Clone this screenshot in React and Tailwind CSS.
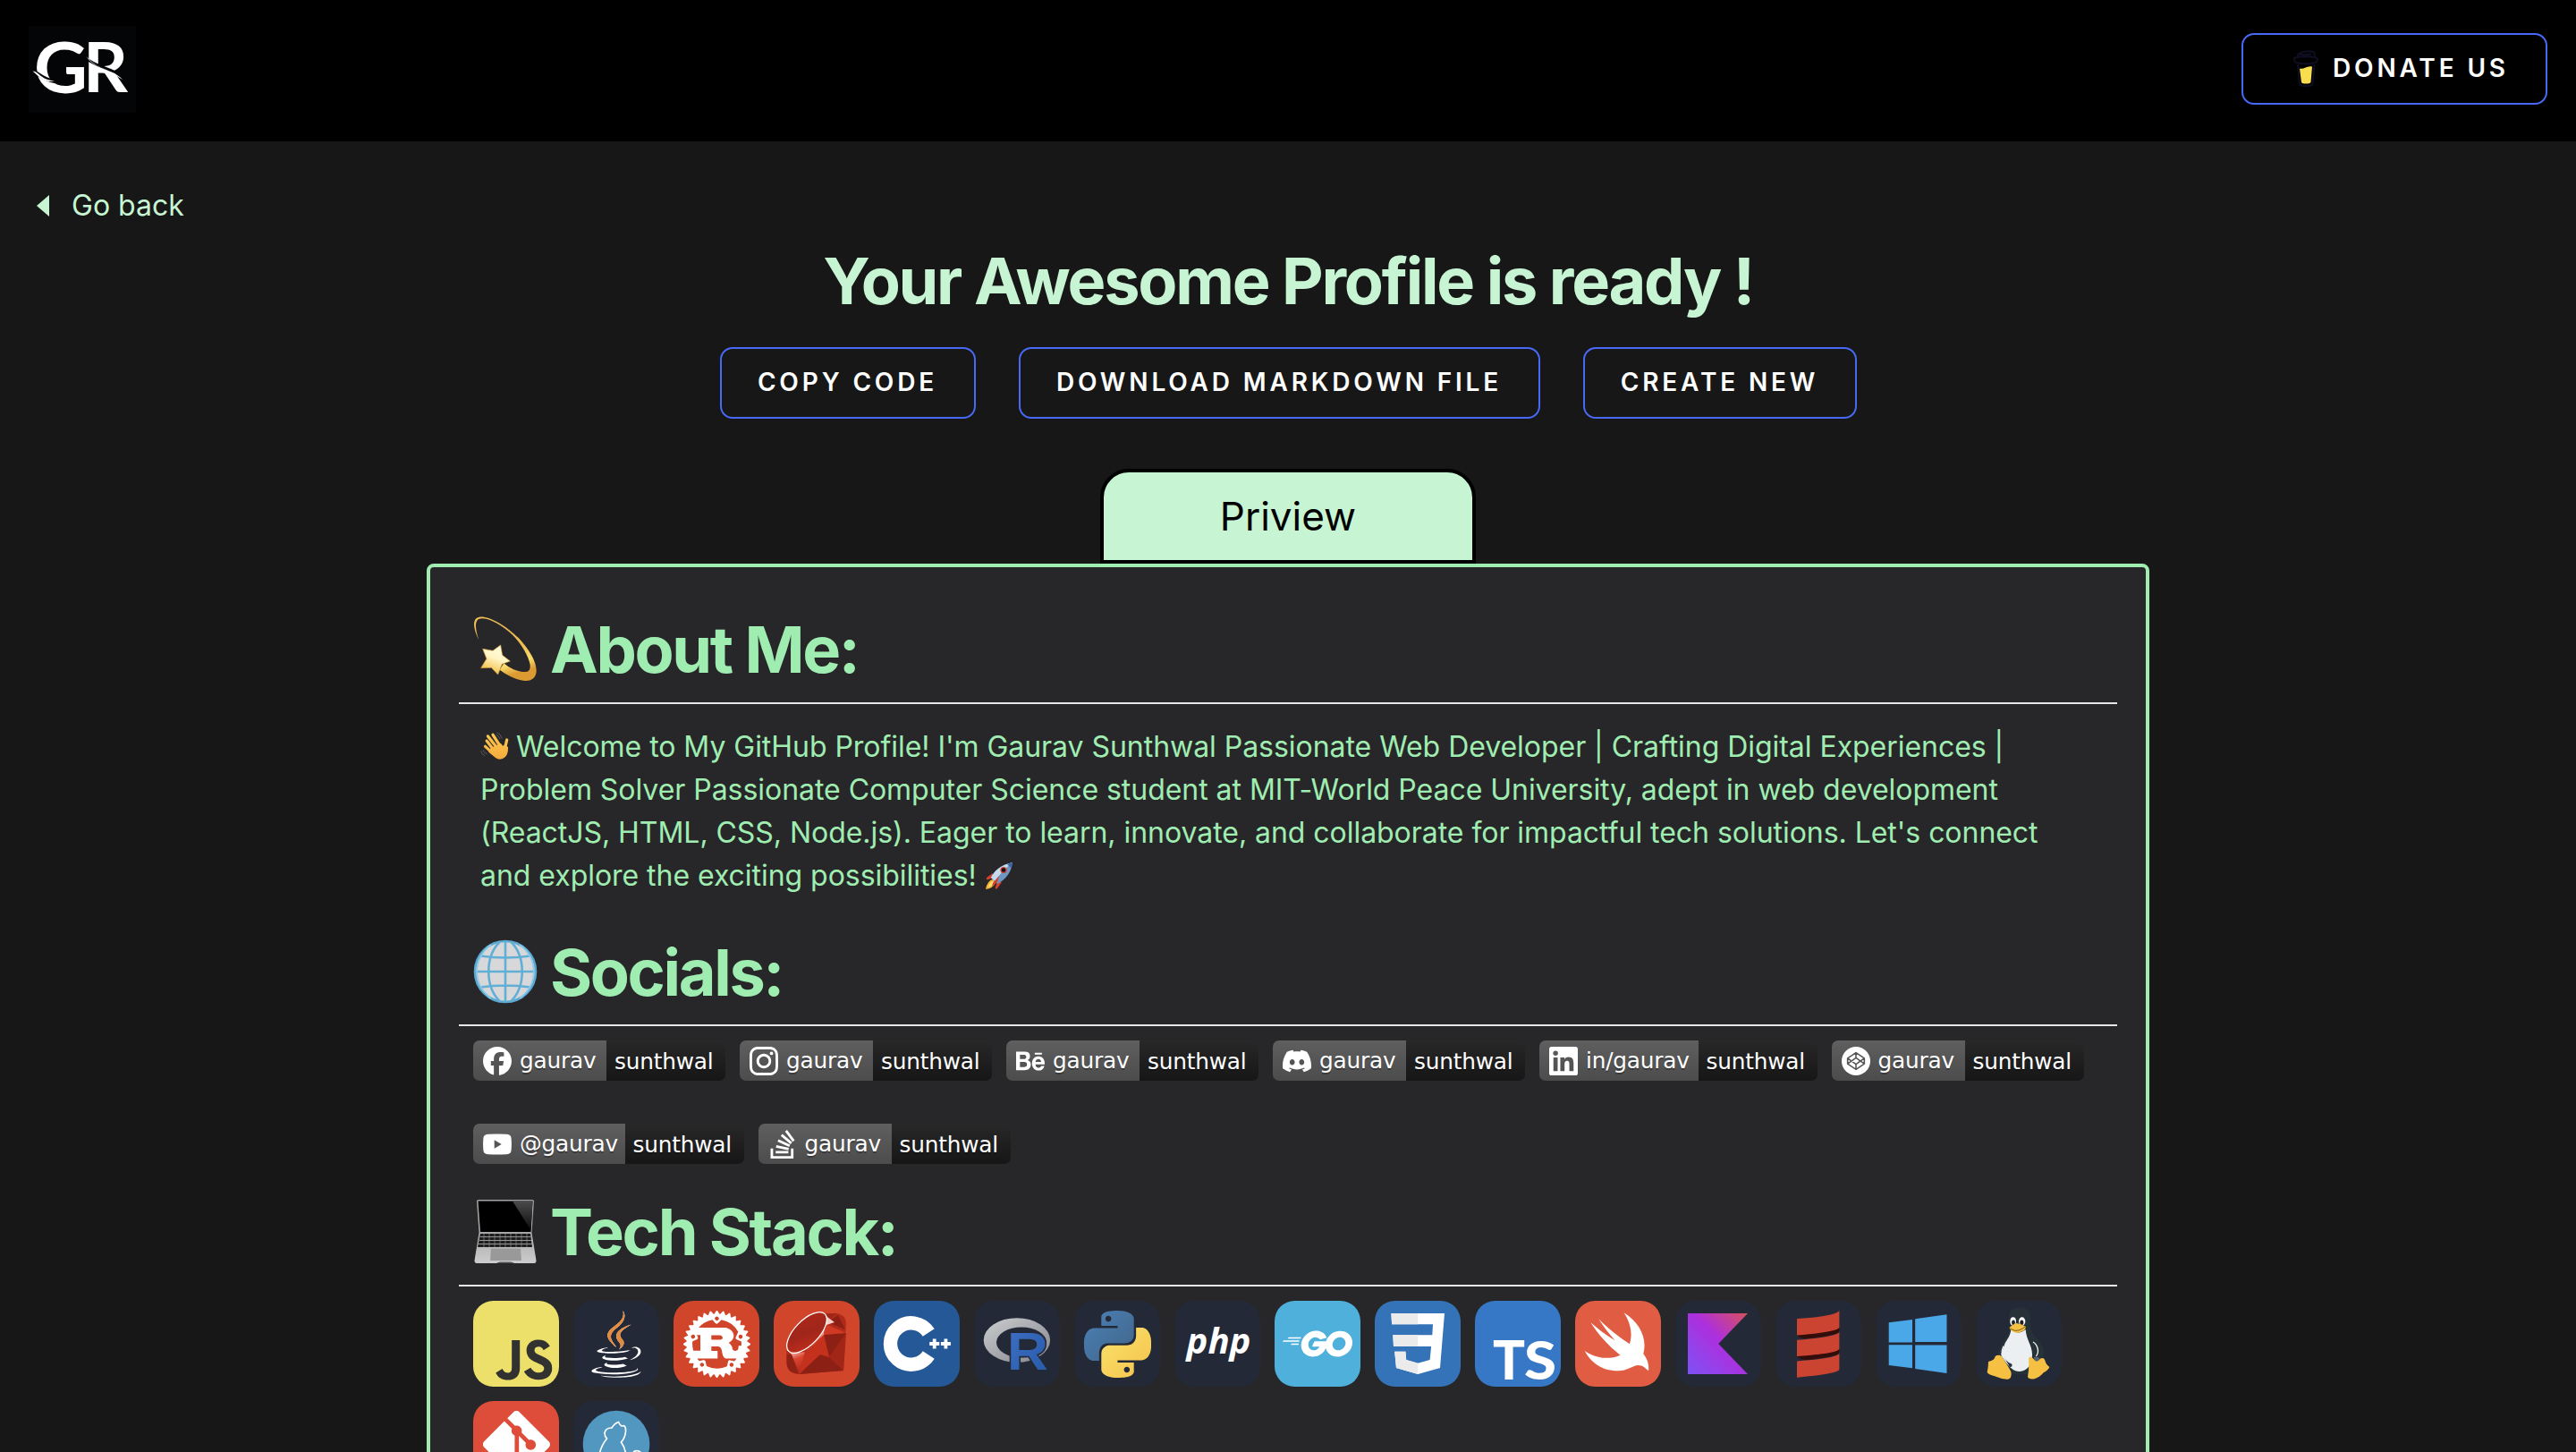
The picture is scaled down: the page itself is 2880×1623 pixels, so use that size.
import React from "react";
import {
  SiFacebook, SiInstagram, SiBehance, SiDiscord, SiStackoverflow,
  SiJavascript, SiRust, SiGo, SiGit,
} from "react-icons/si";
import { FaJava } from "react-icons/fa";

/* ---------- brand and emoji drawings ---------- */

function Logo() {
  return (
    <svg viewBox="32 29 120 97" className="h-[97px] w-[120px] overflow-visible bg-[#040507]">
      <g fill="#fff" fontFamily="Lato, sans-serif" fontWeight="900">
        <text x="38" y="104" fontSize="78" textLength="60" lengthAdjust="spacingAndGlyphs" fontWeight="700">G</text>
        <text x="93" y="103" fontSize="76" textLength="50" lengthAdjust="spacingAndGlyphs" fontWeight="700">R</text>
      </g>
      <path d="M36 79C44 82 46 88 61 91" fill="none" stroke="#040507" strokeWidth="4" />
      <path d="M36.500 79.500C44 80 45 89 61 90.500C50 93 45 87 36.500 79.500Z" fill="#fff" />
      <path d="M96 65C106 74 122 76 137 85" fill="none" stroke="#040507" strokeWidth="3" />
      <path d="M97 63C100 73 122 77 129 84L137 89C134 85 131 86 136 88C130 80 105 76 97 63Z" fill="#fff" />
    </svg>
  );
}

function CoffeeCup() {
  return (
    <svg viewBox="0 0 28 41" className="h-[41px] w-7" fill="none" stroke="#0f0e22" strokeWidth="2" strokeLinejoin="round">
      <path d="M5 16L7 38C8 41 20 41 21.500 38L23.500 16" />
      <path d="M7 20.500C12 22 15 17 21 18.500L19.500 36C18 38 10 38 9 36Z" fill="#f8de4e" stroke="none" />
      <path d="M1.500 8.500C9 7 19 7 26 8.500C28 11 26 14 25 14C18 15.500 9 15.500 3 14C1 13 0 10 1.500 8.500Z" />
      <path d="M5 7C3 1 23 0 23.500 3L24 7M7 4.500C12 6 16 5 20 4.500" />
    </svg>
  );
}

function DizzyEmoji() {
  return (
    <svg viewBox="27 27 216 216" className="size-[72px] shrink-0">
      <defs>
        <linearGradient id="ring" x1="0" y1="0" x2="0.300" y2="1">
          <stop offset="0" stopColor="#f0c057" /><stop offset="0.600" stopColor="#eebb50" /><stop offset="0.850" stopColor="#f9dc6b" /><stop offset="1" stopColor="#dc9a33" />
        </linearGradient>
        <linearGradient id="star" x1="0.700" y1="0" x2="0.300" y2="1">
          <stop offset="0" stopColor="#fffbe0" /><stop offset="0.450" stopColor="#fff5c4" /><stop offset="1" stopColor="#efb835" />
        </linearGradient>
      </defs>
      <path fill="url(#ring)" d="M46 106C30 75 24 45 38 33C60 15 130 50 180 100C215 138 240 180 239 210C238 238 215 246 195 242C165 238 135 220 116 206L130 184C150 202 175 212 195 213C215 214 219 205 218 190C215 165 190 120 160 90C120 50 65 25 45 36C30 46 36 75 46 106Z" />
      <path fill="url(#star)" stroke="#d99a3a" strokeWidth="2" strokeLinejoin="round" d="M119 123L125 157L151 177L124 187L110 222L88 199L53 200L72 169L59 136L93 142Z" />
    </svg>
  );
}

function GlobeEmoji() {
  return (
    <svg viewBox="0 0 72 72" className="size-[72px] shrink-0" fill="none" stroke="#62afd6" strokeWidth="2.600">
      <circle cx="36" cy="36" r="34" fill="#d8d8da" stroke="#5ba9d1" />
      <path d="M36 2V70M2 36H70M8 18.500C26 21 46 21 64 18.500M8 53.500C26 51 46 51 64 53.500" />
      <path d="M30 2.500C13 19 13 53 30 69.500M42 2.500C59 19 59 53 42 69.500" />
      <path d="M20 6C-1 22 -1 50 20 66M52 6C73 22 73 50 52 66" strokeWidth="1.600" stroke="#8ccbe8" />
    </svg>
  );
}

function LaptopEmoji() {
  return (
    <svg viewBox="0 0 72 72" className="size-[72px] shrink-0">
      <defs>
        <linearGradient id="deck" x1="0" y1="0" x2="0" y2="1"><stop offset="0" stopColor="#a9a9a9" /><stop offset="1" stopColor="#cdcdcd" /></linearGradient>
        <linearGradient id="glare" x1="0" y1="0" x2="0" y2="1"><stop offset="0" stopColor="#4b4b4b" /><stop offset="1" stopColor="#0c0c0c" /></linearGradient>
      </defs>
      <path d="M4 2.500Q4 1 6 1H66Q68 1 68 2.500L65.500 38H6.500Z" fill="#a5a5a5" />
      <path d="M5.500 2.500H66.500L64.500 37H8Z" fill="#000" />
      <path d="M44 2.500H66.500L64.500 35Z" fill="url(#glare)" />
      <path d="M6.500 38H65.500L70.500 69Q70.500 72 68 72H4Q1.500 72 1.500 69Z" fill="url(#deck)" />
      <path d="M8 39H64L66 54H5Z" fill="#1c1c1c" />
      <path d="M7.500 42.500H64.500M7 46.500H65M6 50.500H66" stroke="#a5a5a5" strokeWidth="0.900" />
      <path d="M12 39V54M18 39V54M24 39V54M30 39V54M36 39V54M42 39V54M48 39V54M54 39V54M60 39V54" stroke="#8d8d8d" strokeWidth="0.700" />
      <path d="M20 55.500H53L54 69H19Z" fill="#999" />
      <path d="M26 72Q28 70.500 30 70.500H42Q44 70.500 46 72Z" fill="#555" />
    </svg>
  );
}

function WaveEmoji() {
  return (
    <svg viewBox="50 413 98 98" className="mr-[8px] inline-block size-8 align-[-4px]">
      <defs><linearGradient id="skin" gradientUnits="userSpaceOnUse" x1="0" y1="420" x2="0" y2="510"><stop offset="0" stopColor="#fdca52" /><stop offset="1" stopColor="#f3a93c" /></linearGradient></defs>
      <g stroke="url(#skin)" strokeLinecap="round" strokeWidth="10">
        <path d="M72 444L96 476M76 428L106 466M93 423L118 462M67 463L92 486M134 470L141 440.500" />
      </g>
      <path d="M86 468L120 452Q126 462 129 461L134 455L145 466Q146 492 132 502Q116 512 102 502L78 482Z" fill="url(#skin)" />
      <path d="M79 445L95 465M90 438L104 458" stroke="#d98c2b" strokeWidth="1.500" />
      <g fill="none" stroke="#66666a" strokeWidth="2.500"><path d="M107 416Q120 420 124 436M104 423Q114 427 118 438M52 478Q54 490 66 495M59 475Q62 484 73 489" /></g>
    </svg>
  );
}

function RocketEmoji() {
  return (
    <svg viewBox="0 0 32 32" className="inline-block size-8 align-[-5px]">
      <path d="M9 13L2 18Q1 21 4 20L9 18ZM19 23L14 30Q11 32 12 28L14 23Z" fill="#d8402c" />
      <path d="M9 20Q3 21 1 31Q9 30 12 24Z" fill="#f4b63c" /><path d="M9 22Q5 24 4 29Q8 27 10 24Z" fill="#fbe66b" />
      <path d="M7 18Q13 5 31 1Q29 17 14 25Z" fill="#6f96c2" /><path d="M7 18Q13 5 31 1Q20 10 11 22Z" fill="#c5d9ec" />
      <path d="M25 3L31 1L29 7Z" fill="#3465a4" />
      <circle cx="21" cy="9.500" r="3.600" fill="#c9402f" /><circle cx="21" cy="9.500" r="2.200" fill="#111" />
      <path d="M9 24L16 16L14 23L8 28Z" fill="#d33f2c" />
    </svg>
  );
}

/* ---------- social badges ---------- */

const ICON = "size-8";

function LinkedinIcon() {
  return (
    <svg viewBox="0 0 24 24" className={ICON} fill="currentColor">
      <path d="M20.447 20.452h-3.554v-5.569c0-1.328-.027-3.037-1.852-3.037-1.853 0-2.136 1.445-2.136 2.939v5.667H9.351V9h3.414v1.561h.046c.477-.9 1.637-1.850 3.370-1.850 3.601 0 4.267 2.370 4.267 5.455v6.286zM5.337 7.433a2.062 2.062 0 0 1-2.063-2.065 2.064 2.064 0 1 1 2.063 2.065zm1.782 13.019H3.555V9h3.564v11.452zM22.225 0H1.771C.792 0 0 .774 0 1.729v20.542C0 23.227.792 24 1.771 24h20.451C23.200 24 24 23.227 24 22.271V1.729C24 .774 23.200 0 22.222 0h.003z" />
    </svg>
  );
}

function CodepenIcon() {
  return (
    <svg viewBox="0 0 24 24" className={ICON} fill="none">
      <circle cx="12" cy="12" r="12" fill="currentColor" />
      <path d="M12 5L19 9.700V14.300L12 19L5 14.300V9.700ZM12 5V9.300M12 14.700V19M5 9.700L12 14.700L19 9.700M5 14.300L12 9.300L19 14.300" stroke="#565656" strokeWidth="1.200" strokeLinejoin="round" />
    </svg>
  );
}

function YoutubeIcon() {
  return (
    <svg viewBox="0 0 24 24" className={ICON}>
      <path d="M4 3.600Q12 3 20 3.600Q23.500 4 23.700 7Q24.200 12 23.700 17Q23.500 20 20 20.400Q12 21 4 20.400Q.5 20 .3 17Q-.2 12 .3 7Q.5 4 4 3.600Z" fill="currentColor" />
      <path d="M9.500 8.500L15.500 12L9.500 15.500Z" fill="#565656" />
    </svg>
  );
}

function Badge({ icon: Icon, label, width }) {
  return (
    <div className="flex h-[45px] overflow-hidden rounded-[7px] font-['DejaVu_Sans',sans-serif] text-[24.75px] leading-[47px] tracking-[-0.2px] text-white">
      <div className={`flex items-center bg-linear-to-b from-[#5f5f5f] to-[#4c4c4c] pl-[11px] ${width}`}>
        <Icon className={ICON} />
        <span className="ml-[9px] [text-shadow:0_2.250px_0_rgba(1,1,1,0.300)]">{label}</span>
      </div>
      <div className="w-[133px] bg-linear-to-b from-[#282828] to-[#161616] pl-[9px] [text-shadow:0_2.250px_0_rgba(1,1,1,0.300)]">
        sunthwal
      </div>
    </div>
  );
}

const socials = [
  { icon: SiFacebook, label: "gaurav", width: "w-[149px]" },
  { icon: SiInstagram, label: "gaurav", width: "w-[149px]" },
  { icon: SiBehance, label: "gaurav", width: "w-[149px]" },
  { icon: SiDiscord, label: "gaurav", width: "w-[149px]" },
  { icon: LinkedinIcon, label: "in/gaurav", width: "w-[177.5px]" },
  { icon: CodepenIcon, label: "gaurav", width: "w-[149px]" },
  { icon: YoutubeIcon, label: "@gaurav", width: "w-[169.5px]" },
  { icon: SiStackoverflow, label: "gaurav", width: "w-[149px]" },
];

/* ---------- tech tiles ---------- */

const Art = ({ children }) => <svg viewBox="0 0 96 96" className="size-24 overflow-visible">{children}</svg>;

const Javascript = () => <SiJavascript className="size-24 rounded-[22.500px] text-[#ecdf6a]" />;

const Java = () => (
  <div className="relative h-[75px] w-[56px]">
    <FaJava className="h-[75px] w-[56px] text-white" />
    <FaJava className="absolute inset-0 h-[75px] w-[56px] text-[#e58a3a] [clip-path:polygon(0_0,100%_0,100%_50%,66%_50%,60%_57%,50%_58%,38%_54%,34%_51%,0_51%)]" />
  </div>
);

const Rust = () => <SiRust className="size-[75px] text-white" />;

const Ruby = () => (
  <Art>
    <defs>
      <linearGradient id="rb1" x1="0" y1="1" x2="1" y2="0"><stop offset="0" stopColor="#c5301c" /><stop offset="0.500" stopColor="#a0251a" /><stop offset="1" stopColor="#b02a1a" /></linearGradient>
      <linearGradient id="rb2" x1="0" y1="0" x2="0.300" y2="1"><stop offset="0" stopColor="#fff" /><stop offset="0.500" stopColor="#d9452f" /><stop offset="1" stopColor="#b52a1c" /></linearGradient>
      <linearGradient id="rb3" x1="1" y1="0" x2="0.200" y2="1"><stop offset="0" stopColor="#fff" /><stop offset="0.450" stopColor="#e0543c" /><stop offset="1" stopColor="#b52a1c" /></linearGradient>
    </defs>
    <path d="M50 15Q54 14 71 14Q80 16 81 24L78 78L29 82Q14 82 14.500 66L14 52Z" fill="#b02a1a" />
    <path d="M14.500 54L28 56L35 57L29 82L20 60Z" fill="url(#rb2)" />
    <path d="M14.500 60L20 60L28 81.500Q14 81 14.500 68Z" fill="#8f2215" />
    <path d="M58 22L56 40L37 57L28 58Q50 45 58 22Z" fill="url(#rb3)" />
    <path d="M56 38L81 36L62 63ZM62 63L78 78L29 82L51 60Z" fill="#8d2014" />
    <path d="M35 57L52 60L29 81ZM56 38L37 57L52 60L62 63Z" fill="#c4321e" />
    <path d="M81 36L62 63L78 78Z" fill="#a12617" />
    <path d="M56 38L58 26L81 36Z" fill="#d03a24" /><path d="M60 24L80 32L72 16Z" fill="#8d2014" />
    <path d="M56 15L70 14L62 22Z" fill="#a12617" /><path d="M55 14.500L59 27L68 24Z" fill="#f6d0c8" />
    <ellipse cx="37" cy="35.500" rx="29" ry="13.500" transform="rotate(-46 37 35.500)" fill="url(#rb1)" stroke="#fff" strokeWidth="1.300" />
  </Art>
);

const Cpp = () => (
  <Art>
    <path d="M61.200 35.500A23.200 23.200 0 1 0 61.200 60.500" fill="none" stroke="#fff" strokeWidth="15.400" />
    <path d="M62.200 48H73.200M67.700 42.500V53.500M74.900 48H85.900M80.400 42.500V53.500" stroke="#fff" strokeWidth="3.800" />
  </Art>
);

const RLang = () => (
  <Art>
    <defs>
      <linearGradient id="rg" x1="0" y1="0" x2="1" y2="1"><stop offset="0" stopColor="#cbced0" /><stop offset="1" stopColor="#84838b" /></linearGradient>
      <linearGradient id="rbl" x1="0" y1="0" x2="1" y2="1"><stop offset="0" stopColor="#3f6fc6" /><stop offset="1" stopColor="#255aa5" /></linearGradient>
    </defs>
    <path fillRule="evenodd" fill="url(#rg)" d="M10.700 44A37.200 24.800 0 1 0 85.100 44A37.200 24.800 0 1 0 10.700 44ZM25 46.500A28 17 0 1 1 81 46.500A28 17 0 1 1 25 46.500Z" />
    <text x="37" y="77" fontFamily="Liberation Sans, sans-serif" fontWeight="700" fontSize="60" textLength="46" lengthAdjust="spacingAndGlyphs" fill="url(#rbl)" stroke="#242938" strokeWidth="3" paintOrder="stroke">R</text>
  </Art>
);

const Python = () => (
  <svg viewBox="0 0 24 24" className="size-[75px]">
    <defs>
      <linearGradient id="pyb" x1="0" y1="0" x2="1" y2="1"><stop offset="0" stopColor="#4a81b7" /><stop offset="1" stopColor="#426488" /></linearGradient>
      <linearGradient id="pyy" x1="0" y1="0" x2="1" y2="1"><stop offset="0" stopColor="#fce36c" /><stop offset="1" stopColor="#f3c24c" /></linearGradient>
    </defs>
    <path fill="url(#pyb)" d="M14.250.18l.9.2.73.26.59.3.45.32.34.34.25.34.16.33.1.3.04.26.02.2-.01.13V8.500l-.05.63-.13.55-.21.46-.26.38-.3.31-.33.25-.35.19-.35.14-.33.1-.3.07-.26.04-.21.02H8.770l-.69.05-.59.14-.5.22-.41.27-.33.32-.27.35-.2.36-.15.37-.1.35-.07.32-.04.27-.02.21v3.060H3.170l-.21-.03-.28-.07-.32-.12-.35-.18-.36-.26-.36-.36-.35-.46-.32-.59-.28-.73-.21-.88-.14-1.050-.05-1.230.06-1.220.16-1.040.24-.87.32-.71.36-.57.4-.44.42-.33.42-.24.4-.16.36-.1.32-.05.24-.01h.16l.06.01h8.160v-.83H6.180l-.01-2.750-.02-.37.05-.34.11-.31.17-.28.25-.26.31-.23.38-.2.44-.18.51-.15.58-.12.64-.1.71-.06.77-.04.84-.02 1.270.05zm-6.300 1.980l-.23.33-.08.41.08.41.23.34.33.22.41.09.41-.09.33-.22.23-.34.08-.41-.08-.41-.23-.33-.33-.22-.41-.09-.41.09z" />
    <path fill="url(#pyy)" d="M21.040 6.110l.28.06.32.12.35.18.36.27.36.35.35.47.32.59.28.73.21.88.14 1.040.05 1.230-.06 1.230-.16 1.040-.24.86-.32.71-.36.57-.4.45-.42.33-.42.24-.4.16-.36.09-.32.05-.24.02-.16-.01h-8.220v.82h5.840l.01 2.760.02.36-.05.34-.11.31-.17.29-.25.25-.31.24-.38.2-.44.17-.51.15-.58.13-.64.09-.71.07-.77.04-.84.01-1.270-.04-1.070-.14-.9-.2-.73-.25-.59-.3-.45-.33-.34-.34-.25-.34-.16-.33-.1-.3-.04-.25-.02-.2.01-.13v-5.340l.05-.64.13-.54.21-.46.26-.38.3-.32.33-.24.35-.2.35-.14.33-.1.3-.06.26-.04.21-.02.13-.01h5.840l.69-.05.59-.14.5-.21.41-.28.33-.32.27-.35.2-.36.15-.36.1-.35.07-.32.04-.28.02-.21V6.070h2.090l.14.01zm-6.470 14.250l-.23.33-.08.41.08.41.23.33.33.23.41.08.41-.08.33-.23.23-.33.08-.41-.08-.41-.23-.33-.33-.23-.41-.08-.41.08z" />
  </svg>
);

const Php = () => (
  <Art>
    <text x="13.500" y="58.500" fontFamily="Open Sans, sans-serif" fontStyle="italic" fontWeight="700" fontSize="40" textLength="72" lengthAdjust="spacingAndGlyphs" fill="#fff">php</text>
  </Art>
);

const Go = () => <SiGo className="size-[78px] text-white" />;

const Css = () => (
  <Art>
    <path fill="#fff" d="M18.400 14H78L73 75L48.200 82L24 75L22.200 56.700H34.400L35.200 66L48.200 69.700L61.600 66L63.100 51H21L20.300 38.300H64.300L65 26.300H19.100Z" />
    <path fill="#ebebeb" d="M18.400 14H48.200V26.300H19.100ZM20.300 38.300H48.200V51H21ZM22.200 56.700H34.400L35.200 66L48.200 69.700V82L24 75Z" />
  </Art>
);

const Typescript = () => (
  <Art>
    <g fill="#fff" fontFamily="Lato, sans-serif" fontWeight="900">
      <text x="20" y="87.500" fontSize="60" textLength="36" lengthAdjust="spacingAndGlyphs">T</text>
      <text x="55" y="87.500" fontSize="59" textLength="36" lengthAdjust="spacingAndGlyphs">S</text>
    </g>
  </Art>
);

const Swift = () => (
  <Art>
    <path fill="#fff" d="M10.700 56C20 73 34 78.500 48.700 78.300C58 78.300 63 73 70 72C76 72 78 75 82 78.300C83 70 80 64 76.300 59.300C81 42 72 24 54.500 13.300C62 25 64.500 36 61 48.300C48 40 36 30 26.300 20.300C31 28 37 36 44.600 44.300C34 38 25 31 17.400 24.300C26 38 37 50 50.400 60.700C38 66.500 22 64 10.700 56Z" />
  </Art>
);

const Kotlin = () => (
  <Art>
    <defs><linearGradient id="kt" x1="1" y1="0" x2="0" y2="1"><stop offset="0" stopColor="#d9505c" /><stop offset="0.450" stopColor="#ad2fdd" /><stop offset="1" stopColor="#7d52f5" /></linearGradient></defs>
    <path fill="url(#kt)" d="M14 14H81L48.200 48L81 82H14Z" />
  </Art>
);

const Scala = () => (
  <Art>
    <path fill="#340c09" d="M24 38.500Q28 42 34 42.500Q71 38 71.400 34V30ZM24 62Q28 66 36 66Q71 62 71.400 58V54Z" />
    <path fill="#cb4331" d="M24 20Q71 17 71.400 10.300V30Q68 35 24 38.500ZM24 43.700Q71 40 71.400 34.500V54Q68 59 24 62ZM24 67.500Q71 64 71.400 58.300V77Q68 82 24 85.700Z" />
  </Art>
);

const Windows = () => (
  <Art>
    <path fill="#4ba8e8" d="M14.700 24.300L41 21V46.500H14.700ZM44.200 20.300L79.500 15.300V46H44.200ZM14.700 49.300H41V75.300L14.700 72ZM44.200 49.500H79.500V81L44.200 76Z" />
  </Art>
);

const Linux = () => (
  <svg viewBox="28 28 288 288" className="size-24">
    <path fill="#263238" d="M175 50C150 50 138 66 139 88C140 112 143 120 137 136C126 158 108 176 104 206C110 240 130 262 145 274H205C230 262 256 215 256 196C252 162 222 152 212 124C209 105 215 88 209 70C203 56 192 50 175 50Z" />
    <path fill="#eceff1" d="M146 124C160 138 180 138 195 124C197 158 216 176 217 206C218 242 200 264 174 265C148 266 130 236 113 212C116 196 121 186 126 170C134 156 144 146 146 124Z" />
    <path fill="none" stroke="#eceff1" strokeWidth="4" d="M220 166C236 176 242 200 230 214M121 180Q115 192 115 208" />
    <path fill="#263238" d="M119 210Q130 234 149 240Q152 252 142 250Z" />
    <ellipse cx="153" cy="97" rx="10" ry="14" fill="#fff" /><ellipse cx="183" cy="97" rx="11" ry="14" fill="#fff" />
    <ellipse cx="154" cy="101" rx="5.500" ry="8.500" fill="#212121" /><ellipse cx="182" cy="101" rx="6" ry="8.500" fill="#212121" />
    <path fill="#f6c142" d="M141 117Q152 106 165 103Q182 106 195 114Q196 126 184 130Q170 138 156 133Q141 126 141 117Z" />
    <path fill="none" stroke="#5f4a1c" strokeWidth="2.500" d="M143 121Q160 132 172 127Q186 122 193 115" />
    <path fill="#f6c142" d="M70 232Q92 228 93 214Q104 206 114 214Q128 232 146 266Q150 288 136 291Q118 292 96 282Q70 276 66 268Q70 250 70 232Z" />
    <path fill="#f6c142" d="M205 220Q212 212 221 222Q232 236 244 222Q258 214 262 234Q266 244 275 250Q272 260 256 268Q240 286 224 290Q204 292 202 282Q208 250 205 220Z" />
    <path fill="#546170" d="M222 218Q232 212 242 220Q240 230 232 231Q224 230 222 218Z" />
  </svg>
);

const Git = () => <SiGit className="size-[75px] text-white" />;

const Yarn = () => (
  <Art>
    <circle cx="48" cy="48" r="37.300" fill="#5197c0" />
    <path d="M29 60Q31 50 37.500 42Q34 38 35.500 34Q37 30 43 30Q46 25 50.500 23.500Q52 27 54 28Q59 26 58.500 34Q58 41 53.500 46Q59 54 58.500 62M67 57Q72 54 76 58" fill="none" stroke="#fff" strokeWidth="1.700" />
  </Art>
);

const tiles = [
  { name: "javascript", bg: "bg-[#323330]", icon: Javascript },
  { name: "java", bg: "bg-[#242938]", icon: Java },
  { name: "rust", bg: "bg-[#d1462b]", icon: Rust },
  { name: "ruby", bg: "bg-[#d1462b]", icon: Ruby },
  { name: "cpp", bg: "bg-[#255896]", icon: Cpp },
  { name: "r", bg: "bg-[#242938]", icon: RLang },
  { name: "python", bg: "bg-[#242938]", icon: Python },
  { name: "php", bg: "bg-[#242938]", icon: Php },
  { name: "go", bg: "bg-[#4fb0db]", icon: Go },
  { name: "css", bg: "bg-[#3573b8]", icon: Css },
  { name: "typescript", bg: "bg-[#3678c6]", icon: Typescript },
  { name: "swift", bg: "bg-[#e05d44]", icon: Swift },
  { name: "kotlin", bg: "bg-[#242938]", icon: Kotlin },
  { name: "scala", bg: "bg-[#242938]", icon: Scala },
  { name: "windows", bg: "bg-[#242938]", icon: Windows },
  { name: "linux", bg: "bg-[#242938]", icon: Linux },
  { name: "git", bg: "bg-[#de4c3a]", icon: Git },
  { name: "yarn", bg: "bg-[#242938]", icon: Yarn },
];

/* ---------- page ---------- */

function OutlineButton({ width, children }) {
  return (
    <button className={`flex h-20 items-center justify-center rounded-[14px] border-2 border-[#4769f5] pb-[2px] text-[28px] font-semibold tracking-[3.850px] text-white uppercase ${width}`}>
      {children}
    </button>
  );
}

function SectionHeading({ emoji, height, children }) {
  return (
    <h2 className={`flex border-b-2 border-[#e5e7eb] pl-4 text-[72px] leading-[82px] font-bold tracking-[-2.350px] text-[#a0edb2] ${height}`}>
      <span className="mt-[4px] mr-[14px]">{emoji}</span>
      {children}
    </h2>
  );
}

export default function App() {
  return (
    <div className="h-[1623px] overflow-hidden bg-[#171717] font-[Inter,sans-serif]">
      <header className="flex h-[158px] items-start justify-between bg-black px-8">
        <div className="pt-[29px]"><Logo /></div>
        <div className="pt-[37px]">
          <OutlineButton width="w-[342px]">
            <span className="mr-[16px] ml-[15px]"><CoffeeCup /></span>
            Donate us
          </OutlineButton>
        </div>
      </header>

      <main>
        <a className="flex items-center pt-[48px] pl-[41px] text-[32px] leading-[48px] text-[#c7f5d3]">
          <svg viewBox="0 0 14 24" className="mr-[25px] h-6 w-3.5" fill="currentColor"><path d="M14 0V24L0 12Z" /></svg>
          Go back
        </a>

        <h1 className="mt-[20px] text-center text-[72px] leading-[80px] font-bold tracking-[-2.250px] text-[#c7f5d3]">Your Awesome Profile is ready !</h1>

        <div className="mt-[34px] flex justify-center gap-12">
          <OutlineButton width="w-[286px]">Copy code</OutlineButton>
          <OutlineButton width="w-[583px]">Download Markdown File</OutlineButton>
          <OutlineButton width="w-[306px]">Create new</OutlineButton>
        </div>

        <div className="mx-auto mt-14 flex h-[106px] w-[420px] items-center justify-center rounded-t-[32px] border-4 border-black bg-[#c7f5d3] text-[44px] text-black">
          Priview
        </div>

        <section className="mx-auto h-[1200px] w-[1926px] rounded-lg border-4 border-[#a0edb2] bg-[#272729] px-8 pt-[51px]">
          <SectionHeading emoji={<DizzyEmoji />} height="h-[102px]">About Me:</SectionHeading>
          <p className="mt-[24px] pl-6 text-[32px] leading-[48px] tracking-[-0.040px] whitespace-nowrap text-[#a0edb2]">
            <WaveEmoji />Welcome to My GitHub Profile! I'm Gaurav Sunthwal Passionate Web Developer | Crafting Digital Experiences |<br />
            Problem Solver Passionate Computer Science student at MIT-World Peace University, adept in web development<br />
            (ReactJS, HTML, CSS, Node.js). Eager to learn, innovate, and collaborate for impactful tech solutions. Let's connect<br />
            and explore the exciting possibilities! <RocketEmoji />
          </p>

          <div className="mt-[43px]">
            <SectionHeading emoji={<GlobeEmoji />} height="h-[101px]">Socials:</SectionHeading>
          </div>
          <div className="mt-4 flex flex-wrap gap-x-4 gap-y-12 pl-4">
            {socials.map((s, i) => <Badge key={i} {...s} />)}
          </div>

          <div className="mt-[35px]">
            <SectionHeading emoji={<LaptopEmoji />} height="h-[102px]">Tech Stack:</SectionHeading>
          </div>
          <div className="mt-4 grid grid-cols-[repeat(16,96px)] gap-4 pl-4">
            {tiles.map(({ name, bg, icon: Icon }) => (
              <div key={name} className={`flex size-24 items-center justify-center rounded-[22.500px] ${bg}`}>
                <Icon />
              </div>
            ))}
          </div>
        </section>
      </main>
    </div>
  );
}
